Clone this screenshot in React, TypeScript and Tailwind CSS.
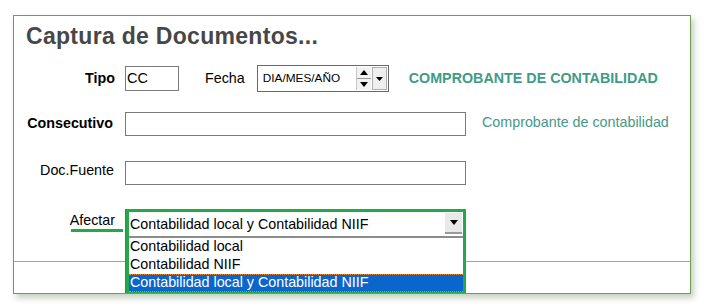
import React from "react";

const Tri = ({ up = false, w = 7, h = 4 }: { up?: boolean; w?: number; h?: number }) => (
  <svg width={w} height={h} viewBox={`0 0 ${w} ${h}`} className="block">
    {up ? (
      <polygon points={`0,${h} ${w},${h} ${w / 2},0`} fill="#000" />
    ) : (
      <polygon points={`0,0 ${w},0 ${w / 2},${h}`} fill="#000" />
    )}
  </svg>
);

export default function App() {
  return (
    <div className="w-[704px] h-[308px] bg-white overflow-hidden font-['Liberation_Sans',Arial,sans-serif] text-black">
      <div className="ml-[13px] mt-[15px] w-[678px] h-[279px] border border-[#6f9a5a] bg-white shadow-[3px_4px_6px_rgba(90,120,70,0.35)] flex flex-col overflow-hidden">
        <h1 className="ml-[12px] mt-[9px] text-[23px] leading-[22px] font-bold text-[#474747] tracking-[0.3px]">
          Captura de Documentos...
        </h1>

        {/* Row 1 */}
        <div className="mt-[18px] h-[27px] flex items-center">
          <div className="w-[102px] text-right text-[14.3px] font-bold pr-[1px]">Tipo</div>
          <div className="ml-[9px] w-[54px] h-[25px] border border-[#7a7a7a] flex items-center pl-[1px] text-[14.5px]">
            CC
          </div>
          <div className="ml-[26px] text-[14.3px]">Fecha</div>
          <div className="ml-[12px] w-[132px] h-[27px] border border-[#6a6a6a] flex items-center">
            <span className="ml-[5px] text-[11.8px] flex-1">DIA/MES/AÑO</span>
            <div className="w-[15px] h-[23px] flex flex-col border-l border-[#c8c8c8] bg-[#f2f2f2]">
              <div className="flex-1 flex items-center justify-center border-b border-[#9a9a9a]">
                <Tri up w={8} h={5} />
              </div>
              <div className="flex-1 flex items-center justify-center">
                <Tri w={8} h={5} />
              </div>
            </div>
            <div className="ml-[1px] mr-[1px] w-[15px] h-[23px] bg-[#efefef] border border-[#b0b0b0] flex items-center justify-center">
              <Tri w={7} h={4} />
            </div>
          </div>
          <div className="ml-[20px] text-[14.3px] font-bold text-[#3f9b86]">COMPROBANTE DE CONTABILIDAD</div>
        </div>

        {/* Row 2 */}
        <div className="mt-[20px] h-[24px] flex items-center">
          <div className="w-[102px] text-right text-[14.3px] font-bold pr-[3px]">Consecutivo</div>
          <div className="ml-[9px] w-[341px] h-[24px] border border-[#7a7a7a]" />
          <div className="ml-[16px] text-[14.3px] text-[#46998a] -mt-[3px]">Comprobante de contabilidad</div>
        </div>

        {/* Row 3 */}
        <div className="mt-[25px] h-[24px] flex items-center">
          <div className="w-[102px] text-right text-[14.3px] -mt-[4px] pr-[2px]">Doc.Fuente</div>
          <div className="ml-[9px] w-[341px] h-[24px] border border-[#7a7a7a]" />
        </div>

        {/* Row 4 */}
        <div className="mt-[24px] h-[28px] flex items-start">
          <div className="w-[102px] flex justify-end">
            <div className="mt-[3px] flex flex-col items-end">
              <span className="text-[14.3px] leading-[16px] pr-[1px]">Afectar</span>
              <div className="mt-[1px] -mr-[7px] w-[52px] h-[3px] bg-[#22a94a]" />
            </div>
          </div>
          <div className="ml-[9px] w-[341px] h-[28px] relative">
            <div className="absolute left-0 top-0 w-[341px] h-[86px] border-l border-[#6a6a6a] z-10">
              <div className="w-[340px] h-[86px] border-[3px] border-[#22a94a] bg-white flex flex-col">
                <div className="h-[24px] flex items-center relative">
                  <span className="ml-[1px] text-[14.3px] leading-[16px]">Contabilidad local y Contabilidad NIIF</span>
                  <div className="absolute right-[1px] top-[1px] w-[17px] h-[21px] bg-[#e9e9e9] border-b-2 border-[#9a9a9a] flex items-center justify-center">
                    <Tri w={8} h={5} />
                  </div>
                </div>
                <div className="h-[2px] bg-[#8c8c8c]" />
                <div className="h-[18px] flex items-center text-[14.3px] pl-[1px]">Contabilidad local</div>
                <div className="h-[18px] flex items-center text-[14.3px] pl-[1px]">Contabilidad NIIF</div>
                <div className="h-[18px] flex items-center text-[14.3px] pl-[1px] bg-[#0a66cc] text-white border-y border-dotted border-[#e8893a]">
                  Contabilidad local y Contabilidad NIIF
                </div>
              </div>
            </div>
          </div>
        </div>

        {/* footer divider */}
        <div className="mt-[24px] border-t border-[#a3a3a3]" />
      </div>
    </div>
  );
}
